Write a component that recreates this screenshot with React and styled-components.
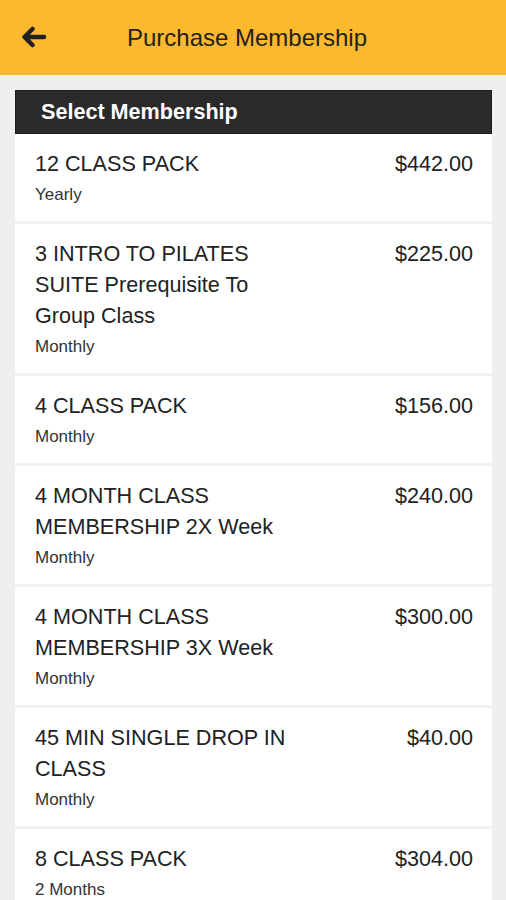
import React from "react";
import styled, { createGlobalStyle } from "styled-components";

const Global = createGlobalStyle`
  html, body { margin: 0; padding: 0; background: #efefef; }
  body { font-family: "Liberation Sans", Arial, sans-serif; }
  * { box-sizing: border-box; }
`;

const Page = styled.div`
  min-height: 900px;
  background: #efefef;
`;

const TopBar = styled.header`
  height: 75px;
  background: #fdb92d;
  display: flex;
  align-items: center;
  padding: 0 20px;
`;

const BackButton = styled.button`
  border: 0;
  background: none;
  padding: 0;
  width: 28px;
  height: 28px;
  display: flex;
  align-items: center;
  justify-content: center;
  margin-top: -2px;
`;

const Title = styled.h1`
  flex: 1;
  margin: 0;
  text-align: center;
  font-size: 24px;
  font-weight: normal;
  color: #222;
  padding-right: 40px;
`;

const Content = styled.main`
  padding: 15px 14px 0 15px;
`;

const Card = styled.section`
  background: #f2f2f2;
  display: flex;
  flex-direction: column;
  gap: 3px;
`;

const CardHeader = styled.div`
  height: 44px;
  background: #2a2a2a;
  border: 1px solid #1c1c1c;
  color: #fff;
  font-weight: bold;
  font-size: 21.6px;
  display: flex;
  align-items: center;
  padding-left: 25px;
  margin-bottom: -3px;
`;

const Row = styled.div`
  background: #fff;
  display: flex;
  justify-content: space-between;
  align-items: flex-start;
  padding: 14px 19px 15px 20px;
`;

const Info = styled.div`
  max-width: 266px;
`;

const Name = styled.div`
  font-size: 21.6px;
  line-height: 31px;
  color: #222;
`;

const Period = styled.div`
  font-size: 17px;
  line-height: 22px;
  margin-top: 5px;
  color: #333;
`;

const Price = styled.div`
  font-size: 21.6px;
  line-height: 31px;
  color: #222;
`;

const items = [
  { name: "12 CLASS PACK", period: "Yearly", price: "$442.00" },
  { name: "3 INTRO TO PILATES SUITE Prerequisite To Group Class", period: "Monthly", price: "$225.00" },
  { name: "4 CLASS PACK", period: "Monthly", price: "$156.00" },
  { name: "4 MONTH CLASS MEMBERSHIP 2X Week", period: "Monthly", price: "$240.00" },
  { name: "4 MONTH CLASS MEMBERSHIP 3X Week", period: "Monthly", price: "$300.00" },
  { name: "45 MIN SINGLE DROP IN CLASS", period: "Monthly", price: "$40.00" },
  { name: "8 CLASS PACK", period: "2 Months", price: "$304.00" },
];

const BackArrow = () => (
  <svg width="26" height="22" viewBox="0 0 26 22" fill="none">
    <path
      d="M23 11H4M11.5 3L3.5 11L11.5 19"
      stroke="#222"
      strokeWidth="4.5"
      strokeLinecap="round"
      strokeLinejoin="round"
    />
  </svg>
);

export default function App() {
  return (
    <Page>
      <Global />
      <TopBar>
        <BackButton aria-label="Back">
          <BackArrow />
        </BackButton>
        <Title>Purchase Membership</Title>
      </TopBar>
      <Content>
        <Card>
          <CardHeader>Select Membership</CardHeader>
          {items.map((it, i) => (
            <Row key={i}>
              <Info>
                <Name>{it.name}</Name>
                <Period>{it.period}</Period>
              </Info>
              <Price>{it.price}</Price>
            </Row>
          ))}
        </Card>
      </Content>
    </Page>
  );
}
